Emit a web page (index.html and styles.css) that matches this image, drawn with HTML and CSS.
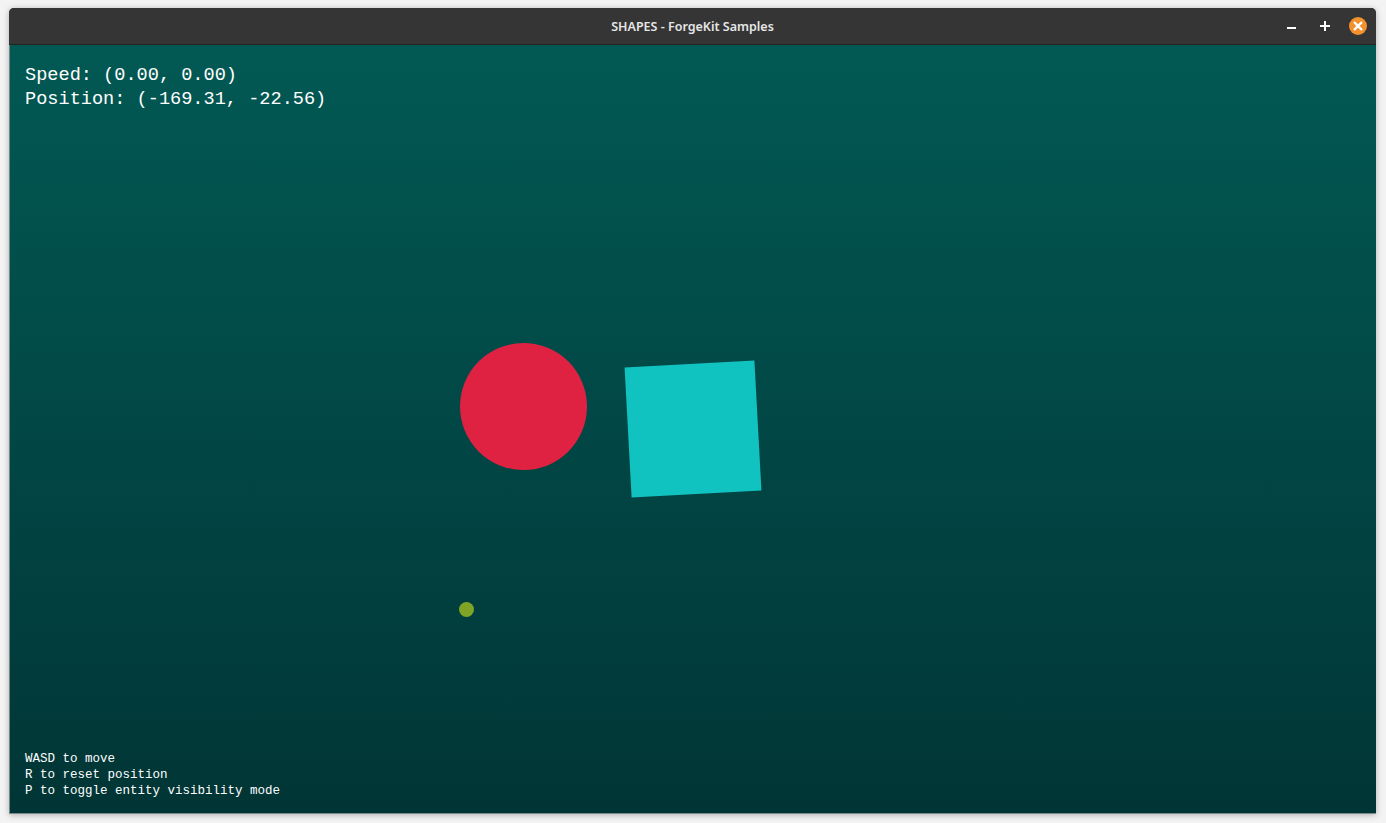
FILE: index.html
```html
<!DOCTYPE html>
<html>
<head>
<meta charset="utf-8">
<title>SHAPES - ForgeKit Samples</title>
<link rel="stylesheet" href="styles.css">
</head>
<body>
<div class="window">
  <header class="titlebar">
    <div class="title">SHAPES - ForgeKit Samples</div>
    <div class="controls">
      <span class="ctl ctl-min"><svg width="12" height="12" viewBox="0 0 12 12"><rect x="1" y="7" width="9" height="2" fill="#fff"/></svg></span>
      <span class="ctl ctl-max"><svg width="12" height="12" viewBox="0 0 12 12"><rect x="1" y="5" width="10" height="2" fill="#fff"/><rect x="5" y="1" width="2" height="10" fill="#fff"/></svg></span>
      <span class="ctl ctl-close"><svg width="18" height="18" viewBox="0 0 18 18"><circle cx="9" cy="9" r="9" fill="#f3912d"/><path d="M5.6 5.6 L12.4 12.4 M12.4 5.6 L5.6 12.4" stroke="#fff" stroke-width="2.2" stroke-linecap="round"/></svg></span>
    </div>
  </header>
  <main class="canvas">
    <div class="hud hud-top">
      <div>Speed: (0.00, 0.00)</div>
      <div>Position: (-169.31, -22.56)</div>
    </div>
    <div class="hud hud-bottom">
      <div>WASD to move</div>
      <div>R to reset position</div>
      <div>P to toggle entity visibility mode</div>
    </div>
    <div class="shape circle"></div>
    <div class="shape square"></div>
    <div class="shape dot"></div>
  </main>
</div>
</body>
</html>
```

FILE: styles.css
```css
* { box-sizing: border-box; }
html, body {
  margin: 0;
  padding: 0;
  width: 1386px;
  height: 823px;
  overflow: hidden;
}
body {
  background: #f3f3f3;
  padding: 8px 10px 9px 9px;
}
.window {
  width: 1367px;
  height: 806px;
  display: flex;
  flex-direction: column;
  border-radius: 5px 5px 0 0;
  overflow: hidden;
  box-shadow: 0 1px 6px rgba(0,0,0,0.28);
  background: #353535;
}
.titlebar {
  height: 37px;
  flex: none;
  background: #353535;
  border-bottom: 1px solid #232323;
  display: flex;
  align-items: center;
  justify-content: center;
  position: relative;
}
.title {
  font-family: "Noto Sans", "Open Sans", sans-serif;
  font-weight: 600;
  font-size: 12.5px;
  color: #e6e6e6;
  letter-spacing: 0;
}
.controls {
  position: absolute;
  right: 9px;
  top: 0;
  height: 100%;
  display: flex;
  align-items: center;
  gap: 15px;
}
.ctl { display: flex; align-items: center; justify-content: center; }
.ctl-min, .ctl-max { width: 18px; height: 18px; }
.ctl-close { width: 18px; height: 18px; }
.canvas {
  flex: 1;
  position: relative;
  background: linear-gradient(to bottom, #025954 0%, #01403f 70%, #013535 100%);
  border-left: 1px solid #6e8a88;
  border-bottom: 1px solid #7d8a8a;
  display: flex;
  flex-direction: column;
  justify-content: space-between;
  padding: 19px 15px 14px 15px;
  color: #ffffff;
}
.hud-top {
  font-size: 18.6px;
  line-height: 24px;
  font-family: "Liberation Mono", monospace;
}
.hud-bottom {
  font-size: 12.5px;
  line-height: 16px;
  font-family: "Liberation Mono", monospace;
}
.shape { position: absolute; }
.circle {
  left: 450px;
  top: 298px;
  width: 127px;
  height: 127px;
  border-radius: 50%;
  background: #e02242;
}
.square {
  left: 618px;
  top: 319px;
  width: 130px;
  height: 130px;
  background: #11c3c0;
  transform: rotate(-3.1deg);
}
.dot {
  left: 449px;
  top: 557px;
  width: 15px;
  height: 15px;
  border-radius: 50%;
  background: #80a526;
}
```
